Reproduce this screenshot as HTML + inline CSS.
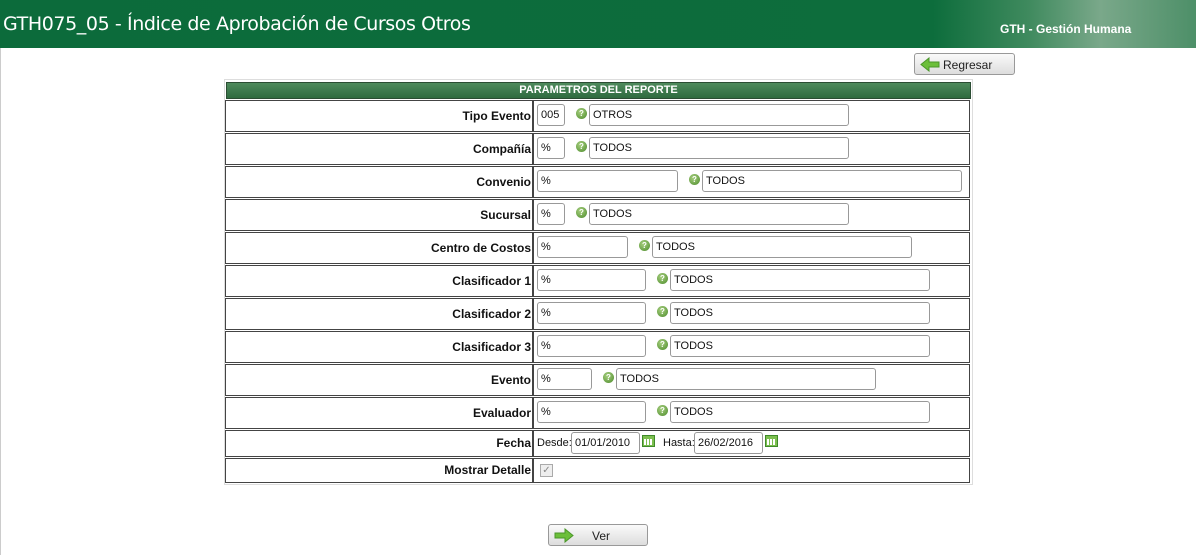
<!DOCTYPE html>
<html><head><meta charset="utf-8"><style>
*{box-sizing:border-box}
body{margin:0;width:1196px;height:555px;background:#fff;font-family:"Liberation Sans",sans-serif;position:relative;overflow:hidden}
.lb{position:absolute;left:0;top:48px;width:1px;height:507px;background:#ccc}
.hdr{position:absolute;left:0;top:0;width:1196px;height:48px;background:linear-gradient(90deg,#0c6b3b 0%,#0d6d3c 78%,#3f8a5e 86%,#7aa88a 92%,#4d8f68 100%)}
.hdr h1{position:absolute;left:3px;top:13px;margin:0;font:19px "DejaVu Sans",sans-serif;color:#fff;letter-spacing:-0.4px}
.hdr .r{position:absolute;left:1000px;top:22px;font:bold 12px "Liberation Sans",sans-serif;color:#fff}
.btn{position:absolute;height:22px;border:1px solid #999;border-radius:3px;background:linear-gradient(#fafafa,#ddd);font-size:12px;color:#222}
.btn .ar{position:absolute;left:5px;top:3px}
.tbl{position:absolute;left:224px;top:79px;width:749px;height:406px;border:1px solid #ddd}
.th{position:absolute;left:1px;top:2px;width:745px;height:17px;background:linear-gradient(#4e8a5c,#2f6b3f);border:1px solid #2b4d33;color:#fff;font:bold 11px "Liberation Sans",sans-serif;text-align:center;line-height:15px}
.lab,.val{position:absolute;border:1px solid #444;height:32px}
.lab{text-align:right;font:bold 12px "Liberation Sans",sans-serif;color:#111;padding-right:1px;width:308px}
.val{width:437px}
.in{position:absolute;height:22px;border:1px solid #999;border-radius:3px;background:#fff;font:11px "Liberation Sans",sans-serif;color:#111;padding:4px 3px;line-height:13px}
.q{position:absolute;width:11px;height:11px;border-radius:50%;background:radial-gradient(circle at 40% 35%,#a8d080,#4b8a2a);color:#fff;font:bold 8px sans-serif;text-align:center;line-height:11px}
.cal{position:absolute;width:13px;height:12px;background:#7cbf4f;border:1px solid #3f8a2a}
.cal:after{content:"";position:absolute;left:1px;top:3px;width:9px;height:6px;background:repeating-linear-gradient(90deg,#fff 0 2px,transparent 2px 3px)}
.t{position:absolute;font-size:11px;font-family:"Liberation Sans",sans-serif;color:#111}
</style></head><body>
<div class="lb"></div>
<div class="hdr"><h1>GTH075_05 - Índice de Aprobación de Cursos Otros</h1><div class="r">GTH - Gestión Humana</div></div>
<div class="btn" style="left:914px;top:53px;width:101px"><svg class="ar" width="20" height="15"><path d="M1 7.5 L9 1 V5 H19 V10 H9 V14 Z" fill="#6cbf3a" stroke="#4a962a"/></svg><span style="position:absolute;left:28px;top:4px">Regresar</span></div>
<div class="tbl">
<div class="th">PARAMETROS DEL REPORTE</div>
</div>
<div id="rows"></div>
<div class="btn" style="left:548px;top:524px;width:100px"><svg class="ar" width="20" height="15"><path d="M19 7.5 L11 1 V5 H1 V10 H11 V14 Z" fill="#6cbf3a" stroke="#4a962a"/></svg><span style="position:absolute;left:43px;top:4px">Ver</span></div>
<script>
var rows=[["Tipo Evento",100,"005",28,"OTROS"],["Compañía",133,"%",28,"TODOS"],["Convenio",166,"%",141,"TODOS"],["Sucursal",199,"%",28,"TODOS"],["Centro de Costos",232,"%",91,"TODOS"],["Clasificador 1",265,"%",109,"TODOS"],["Clasificador 2",298,"%",109,"TODOS"],["Clasificador 3",331,"%",109,"TODOS"],["Evento",364,"%",55,"TODOS"],["Evaluador",397,"%",109,"TODOS"]];
var h="";
rows.forEach(function(r){var y=r[1];
h+='<div class="lab" style="left:225px;top:'+y+'px;line-height:30px">'+r[0]+'</div><div class="val" style="left:533px;top:'+y+'px"></div>';
h+='<div class="in" style="left:537px;top:'+(y+4)+'px;width:'+r[3]+'px">'+r[2]+'</div>';
var ix=537+r[3]+11;h+='<div class="q" style="left:'+ix+'px;top:'+(y+8)+'px">?</div>';
h+='<div class="in" style="left:'+(ix+13)+'px;top:'+(y+4)+'px;width:260px">'+r[4]+'</div>';});
h+='<div class="lab" style="left:225px;top:430px;height:27px;line-height:25px">Fecha</div><div class="val" style="left:533px;top:430px;height:27px"></div>';
h+='<span class="t" style="left:537px;top:437px">Desde:</span><div class="in" style="left:571px;top:432px;width:69px">01/01/2010</div><div class="cal" style="left:642px;top:435px"></div>';
h+='<span class="t" style="left:663px;top:437px">Hasta:</span><div class="in" style="left:694px;top:432px;width:69px">26/02/2016</div><div class="cal" style="left:765px;top:435px"></div>';
h+='<div class="lab" style="left:225px;top:458px;height:25px;line-height:23px">Mostrar Detalle</div><div class="val" style="left:533px;top:458px;height:25px"></div>';
h+='<div style="position:absolute;left:540px;top:464px;width:13px;height:13px;border:1px solid #aaa;background:#eee;font-size:10px;color:#888;text-align:center;line-height:11px">✓</div>';
document.getElementById("rows").innerHTML=h;
</script>
</body></html>
